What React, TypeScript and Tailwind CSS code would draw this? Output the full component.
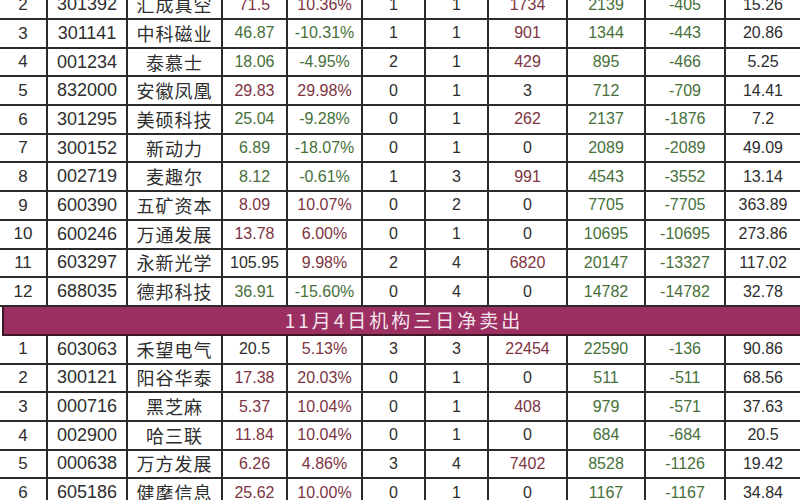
type Tone = "r" | "g" | "k";

type Row = {
  n: string;
  code: string;
  name: string;
  price: [string, Tone];
  pct: [string, Tone];
  a: string;
  b: string;
  buy: [string, Tone];
  sell: [string, Tone];
  net: [string, Tone];
  ratio: string;
};

const topRows: Row[] = [
  { n: "2", code: "301392", name: "汇成真空", price: ["71.5", "r"], pct: ["10.36%", "r"], a: "1", b: "1", buy: ["1734", "r"], sell: ["2139", "g"], net: ["-405", "g"], ratio: "15.26" },
  { n: "3", code: "301141", name: "中科磁业", price: ["46.87", "g"], pct: ["-10.31%", "g"], a: "1", b: "1", buy: ["901", "r"], sell: ["1344", "g"], net: ["-443", "g"], ratio: "20.86" },
  { n: "4", code: "001234", name: "泰慕士", price: ["18.06", "g"], pct: ["-4.95%", "g"], a: "2", b: "1", buy: ["429", "r"], sell: ["895", "g"], net: ["-466", "g"], ratio: "5.25" },
  { n: "5", code: "832000", name: "安徽凤凰", price: ["29.83", "r"], pct: ["29.98%", "r"], a: "0", b: "1", buy: ["3", "k"], sell: ["712", "g"], net: ["-709", "g"], ratio: "14.41" },
  { n: "6", code: "301295", name: "美硕科技", price: ["25.04", "g"], pct: ["-9.28%", "g"], a: "0", b: "1", buy: ["262", "r"], sell: ["2137", "g"], net: ["-1876", "g"], ratio: "7.2" },
  { n: "7", code: "300152", name: "新动力", price: ["6.89", "g"], pct: ["-18.07%", "g"], a: "0", b: "1", buy: ["0", "k"], sell: ["2089", "g"], net: ["-2089", "g"], ratio: "49.09" },
  { n: "8", code: "002719", name: "麦趣尔", price: ["8.12", "g"], pct: ["-0.61%", "g"], a: "1", b: "3", buy: ["991", "r"], sell: ["4543", "g"], net: ["-3552", "g"], ratio: "13.14" },
  { n: "9", code: "600390", name: "五矿资本", price: ["8.09", "r"], pct: ["10.07%", "r"], a: "0", b: "2", buy: ["0", "k"], sell: ["7705", "g"], net: ["-7705", "g"], ratio: "363.89" },
  { n: "10", code: "600246", name: "万通发展", price: ["13.78", "r"], pct: ["6.00%", "r"], a: "0", b: "1", buy: ["0", "k"], sell: ["10695", "g"], net: ["-10695", "g"], ratio: "273.86" },
  { n: "11", code: "603297", name: "永新光学", price: ["105.95", "k"], pct: ["9.98%", "r"], a: "2", b: "4", buy: ["6820", "r"], sell: ["20147", "g"], net: ["-13327", "g"], ratio: "117.02" },
  { n: "12", code: "688035", name: "德邦科技", price: ["36.91", "g"], pct: ["-15.60%", "g"], a: "0", b: "4", buy: ["0", "k"], sell: ["14782", "g"], net: ["-14782", "g"], ratio: "32.78" },
];

const bottomRows: Row[] = [
  { n: "1", code: "603063", name: "禾望电气", price: ["20.5", "k"], pct: ["5.13%", "r"], a: "3", b: "3", buy: ["22454", "r"], sell: ["22590", "g"], net: ["-136", "g"], ratio: "90.86" },
  { n: "2", code: "300121", name: "阳谷华泰", price: ["17.38", "r"], pct: ["20.03%", "r"], a: "0", b: "1", buy: ["0", "k"], sell: ["511", "g"], net: ["-511", "g"], ratio: "68.56" },
  { n: "3", code: "000716", name: "黑芝麻", price: ["5.37", "r"], pct: ["10.04%", "r"], a: "0", b: "1", buy: ["408", "r"], sell: ["979", "g"], net: ["-571", "g"], ratio: "37.63" },
  { n: "4", code: "002900", name: "哈三联", price: ["11.84", "r"], pct: ["10.04%", "r"], a: "0", b: "1", buy: ["0", "k"], sell: ["684", "g"], net: ["-684", "g"], ratio: "20.5" },
  { n: "5", code: "000638", name: "万方发展", price: ["6.26", "r"], pct: ["4.86%", "r"], a: "3", b: "4", buy: ["7402", "r"], sell: ["8528", "g"], net: ["-1126", "g"], ratio: "19.42" },
  { n: "6", code: "605186", name: "健麾信息", price: ["25.62", "r"], pct: ["10.00%", "r"], a: "0", b: "1", buy: ["0", "k"], sell: ["1167", "g"], net: ["-1167", "g"], ratio: "34.84" },
];

const tone = (t: Tone) =>
  t === "r" ? "text-[#7e3442]" : t === "g" ? "text-[#46703a]" : "text-[#2e2e2e]";

const cell = "flex items-center justify-center border-r-2 border-[#2b2b2b] h-full";

const TableRow = ({ r }: { r: Row }) => {
  return (
    <div className="flex h-[28.7px] border-b-2 border-[#2b2b2b] text-[16px] text-[#2e2e2e]">
      <div className={`${cell} w-[48px] text-[17px]`}>{r.n}</div>
      <div className={`${cell} w-[80px] text-[18px]`}>{r.code}</div>
      <div className={`${cell} w-[95px] text-[18px] tracking-[1px] font-['Noto_Sans_CJK_SC',sans-serif]`}>{r.name}</div>
      <div className={`${cell} w-[65px] ${tone(r.price[1])}`}>{r.price[0]}</div>
      <div className={`${cell} w-[75px] ${tone(r.pct[1])}`}>{r.pct[0]}</div>
      <div className={`${cell} w-[63px]`}>{r.a}</div>
      <div className={`${cell} w-[63px]`}>{r.b}</div>
      <div className={`${cell} w-[79px] ${tone(r.buy[1])}`}>{r.buy[0]}</div>
      <div className={`${cell} w-[78px] ${tone(r.sell[1])}`}>{r.sell[0]}</div>
      <div className={`${cell} w-[80px] ${tone(r.net[1])}`}>{r.net[0]}</div>
      <div className="flex items-center justify-center h-full w-[74px]">{r.ratio}</div>
    </div>
  );
};

const App = () => {
  return (
    <div className="w-[800px] h-[500px] overflow-hidden bg-white font-['Liberation_Sans','Noto_Sans_CJK_SC',sans-serif]">
      <div className="-mt-[8.7px]">
        {topRows.map((r) => (
          <TableRow key={"t" + r.n} r={r} />
        ))}
        <div className="ml-[2px] h-[29px] flex items-center justify-center bg-[#9b2f62] border-l-2 border-b-2 border-[#3b1828]">
          <span className="text-[19px] tracking-[3px] text-[#f4e4ec] font-['Noto_Sans_CJK_SC',sans-serif] ml-[4px]">
            11月4日机构三日净卖出
          </span>
        </div>
        {bottomRows.map((r) => (
          <TableRow key={"b" + r.n} r={r} />
        ))}
      </div>
    </div>
  );
};

export default App;
